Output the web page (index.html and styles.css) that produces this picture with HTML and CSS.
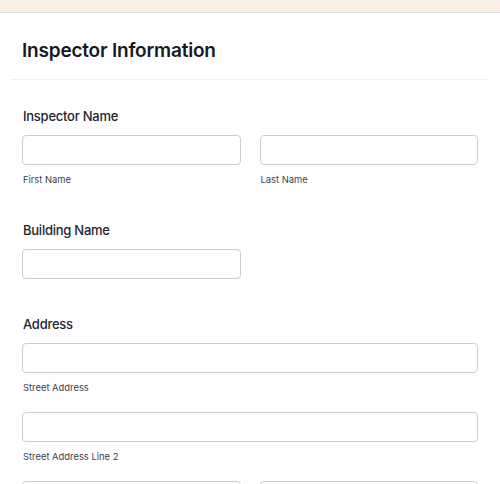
FILE: index.html
```html
<!DOCTYPE html>
<html lang="en">
<head>
<meta charset="utf-8">
<title>Inspector Information</title>
<link rel="stylesheet" href="styles.css">
</head>
<body>
<div class="topbar"></div>
<main class="card">
  <header class="header">
    <h1 class="title">Inspector Information</h1>
  </header>
  <section class="fields">
    <div class="field">
      <label class="label">Inspector Name</label>
      <div class="row two">
        <div class="col">
          <input class="input" type="text">
          <span class="sublabel">First Name</span>
        </div>
        <div class="col">
          <input class="input" type="text">
          <span class="sublabel">Last Name</span>
        </div>
      </div>
    </div>
    <div class="field field-plain">
      <label class="label">Building Name</label>
      <div class="row two">
        <div class="col">
          <input class="input" type="text">
        </div>
      </div>
    </div>
    <div class="field">
      <label class="label">Address</label>
      <div class="stack">
        <div class="col">
          <input class="input" type="text">
          <span class="sublabel">Street Address</span>
        </div>
        <div class="col">
          <input class="input" type="text">
          <span class="sublabel">Street Address Line 2</span>
        </div>
        <div class="row two">
          <div class="col">
            <div class="input"></div>
          </div>
          <div class="col">
            <div class="input"></div>
          </div>
        </div>
      </div>
    </div>
  </section>
</main>
</body>
</html>
```
FILE: styles.css
```css
* { box-sizing: border-box; }
html, body { margin: 0; padding: 0; background: #ffffff; }
body {
  font-family: Inter, "Noto Sans", "Liberation Sans", sans-serif;
  color: #2c3345;
  overflow: hidden;
}
.topbar {
  height: 13px;
  background: #fbefe5;
  border-bottom: 1px solid #dcdde5;
}
.card { background: #ffffff; }
.header {
  margin: 0 11px;
  padding: 26px 11px 16px;
  border-bottom: 1px solid #eff0f3;
}
.title {
  margin: 0;
  font-size: 19px;
  line-height: 24px;
  font-weight: 600;
  color: #161a22;
  letter-spacing: -0.2px;
}
.fields {
  padding: 26px 22px 0;
  display: flex;
  flex-direction: column;
  gap: 33px;
}
.field-plain { margin-bottom: 2px; }
.label {
  display: block;
  font-size: 13px;
  line-height: 20px;
  font-weight: 500;
  color: #1f2430;
  letter-spacing: -0.25px;
  margin: 0 0 9px 1px;
}
.row.two {
  display: grid;
  grid-template-columns: 1fr 1fr;
  gap: 19px;
}
.stack {
  display: flex;
  flex-direction: column;
  gap: 17px;
}
.col { display: flex; flex-direction: column; }
.input {
  display: block;
  width: 100%;
  height: 30px;
  margin: 0;
  border: 1px solid #c9cdd8;
  border-radius: 4px;
  background: #ffffff;
  font: inherit;
}
.sublabel {
  display: block;
  margin: 8px 0 0 1px;
  font-size: 9.4px;
  line-height: 14px;
  color: #3b3f4a;
}
```
